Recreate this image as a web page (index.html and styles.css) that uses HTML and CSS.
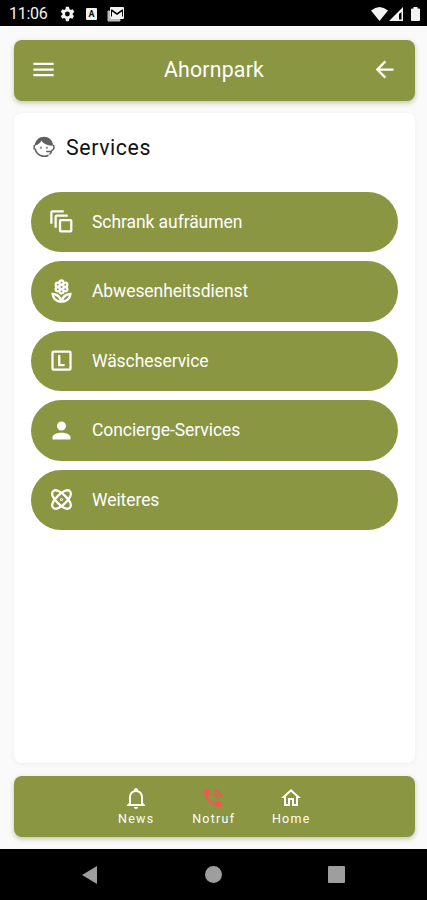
FILE: index.html
```html
<!DOCTYPE html>
<html lang="de">
<head>
<meta charset="utf-8">
<title>Ahornpark</title>
<link rel="stylesheet" href="styles.css">
</head>
<body>
<div class="status">
  <span class="time">11:06</span>
  <svg class="s-gear" viewBox="2 2 20 20"><path fill-rule="evenodd" d="M19.140 12.940a7 7 0 0 0 0-1.880l2.030-1.580-1.920-3.320-2.390.960a7 7 0 0 0-1.620-.940L14.380 3h-3.840l-.360 3.180a7 7 0 0 0-1.620.940l-2.390-.960-1.920 3.320 2.030 1.580a7 7 0 0 0 0 1.880l-2.030 1.580 1.920 3.320 2.390-.960a7 7 0 0 0 1.620.940l.360 3.180h3.840l.360-3.180a7 7 0 0 0 1.620-.940l2.390.960 1.920-3.320zM12.500 15a3 3 0 1 1 0-6 3 3 0 0 1 0 6z"/></svg>
  <span class="s-a">A</span>
  <svg class="s-mail" viewBox="0 0 17 15"><path class="dim" d="M1 4v10h12v-1.500H2.500V4z" stroke="#bbb"/><path fill-rule="evenodd" d="M4 0h12q1 0 1 1v10q0 1-1 1H4q-1 0-1-1V1q0-1 1-1zM5 9.500V4.500L10 8 15 4.500v5h1V2.500h-1L10 6 5 2.500H4v7z"/></svg>
  <span class="grow"></span>
  <svg class="s-wifi" viewBox="0 0 17 14"><path d="M0 3.500Q8.500-3.500 17 3.500L8.500 14z"/></svg>
  <svg class="s-cell" viewBox="0 0 14 14"><path fill-rule="evenodd" d="M14 0v14H0zM12.500 5v7.500H10V7z"/></svg>
  <svg class="s-batt" viewBox="0 0 9 14"><path d="M2.500 0h4v1.500H8q1 0 1 1V13q0 1-1 1H1q-1 0-1-1V2.500q0-1 1-1h1.500z"/></svg>
</div>
<main class="app">
  <header class="bar top">
    <svg class="icon27" viewBox="0 0 24 24"><path d="M3 6H21V8H3V6M3 11H21V13H3V11M3 16H21V18H3V16Z"/></svg>
    <h1>Ahornpark</h1>
    <svg class="icon27" viewBox="0 0 24 24"><path d="M20,11V13H8L13.500,18.500L12.080,19.920L4.160,12L12.080,4.080L13.500,5.500L8,11H20Z"/></svg>
  </header>
  <section class="card">
    <h2><svg class="agent" viewBox="0 0 24 24"><path d="M3.400 10.700C4.100 5.700 7.700 2.600 12 2.600S19.900 5.700 20.600 10.700C15.500 11 11.500 9.500 9.600 6.300 8.300 8.600 6.500 10.200 3.400 10.700z"/><path class="ring" d="M16.200 19.600A8.600 8.600 0 0 1 3.900 14.100L2.900 13.400V11L3.900 10.400M20.200 10.400L21.100 11v2.600L18.500 16.200H14M18.900 16.500Q18 18 17 19"/><circle class="eye" cx="9.200" cy="12.700" r="1.100"/><circle class="eye" cx="14.700" cy="12.700" r="1.100"/></svg><span>Services</span></h2>
    <nav class="list">
      <a class="pill"><svg class="icon27 line" viewBox="0 0 24 24"><path d="M3 14V4q0-1 1-1h10M6.800 17.500V7.800q0-1 1-1h9.700"/><rect x="10.700" y="10.700" width="10" height="10" rx=".7"/></svg><span>Schrank aufräumen</span></a>
      <a class="pill"><svg class="icon27" viewBox="0 0 24 24"><circle cx="12" cy="3.900" r="2.700"/><circle cx="15.500" cy="5.900" r="2.700"/><circle cx="15.500" cy="10.100" r="2.700"/><circle cx="12" cy="12.100" r="2.700"/><circle cx="8.500" cy="10.100" r="2.700"/><circle cx="8.500" cy="5.900" r="2.700"/><circle cx="12" cy="8" r="3"/><g class="hole"><circle cx="12" cy="4.100" r=".8"/><circle cx="15.300" cy="6" r=".8"/><circle cx="15.300" cy="10" r=".8"/><circle cx="12" cy="11.900" r=".8"/><circle cx="8.700" cy="10" r=".8"/><circle cx="8.700" cy="6" r=".8"/><circle cx="12" cy="8" r=".9"/></g><path fill-rule="evenodd" d="M12 22C7 22 3 18.500 3 13c4 0 7.500 1.600 9 4.800C13.500 14.600 17 13 21 13c0 5.500-4 9-9 9zM5.300 15.300c.9 2.500 2.700 4 5.100 4.500-.9-2.400-2.700-3.900-5.100-4.500zM18.700 15.300c-2.400.6-4.200 2.100-5.100 4.500 2.400-.5 4.200-2 5.100-4.500z"/></svg><span>Abwesenheitsdienst</span></a>
      <a class="pill"><svg class="icon27 line" viewBox="0 0 24 24"><rect x="4" y="4" width="16" height="16" rx="1"/><path d="M10 7v9h4.800"/></svg><span>Wäscheservice</span></a>
      <a class="pill"><svg class="icon27" viewBox="0 0 24 24"><path d="M12,4A4,4 0 1,1 12,12A4,4 0 1,1 12,4M12,14C16.420,14 20,15.790 20,18V20H4V18C4,15.790 7.580,14 12,14Z"/></svg><span>Concierge-Services</span></a>
      <a class="pill"><svg class="icon27 line" viewBox="0 0 24 24"><path d="M4.600 4.600C6.800 2.400 11.500 5 15.200 8.800S21.600 17.200 19.400 19.400 12.500 19 8.800 15.200 2.400 6.800 4.600 4.600z"/><path d="M19.400 4.600C17.200 2.400 12.500 5 8.800 8.800S2.400 17.200 4.600 19.400 11.500 19 15.200 15.200 21.600 6.800 19.400 4.600z"/><circle cx="12" cy="12" r=".4"/></svg><span>Weiteres</span></a>
    </nav>
  </section>
  <footer class="bar tabs">
    <a class="tab"><svg viewBox="0 0 24 24"><path d="M10 21H14C14 22.100 13.100 23 12 23S10 22.100 10 21M21 19V20H3V19L5 17V11C5 7.900 7 5.200 10 4.300V4C10 2.900 10.900 2 12 2S14 2.900 14 4V4.300C17 5.200 19 7.900 19 11V17L21 19M17 11C17 8.200 14.800 6 12 6S7 8.200 7 11V18H17V11Z"/></svg><span>News</span></a>
    <a class="tab"><svg class="red" viewBox="0 0 24 24"><path d="M15,12H17A5,5 0 0,0 12,7V9A3,3 0 0,1 15,12M19,12H21C21,7 16.970,3 12,3V5C15.860,5 19,8.130 19,12M20,15.500C18.750,15.500 17.550,15.300 16.430,14.930C16.080,14.820 15.690,14.900 15.410,15.180L13.210,17.380C10.380,15.940 8.060,13.620 6.620,10.790L8.820,8.590C9.100,8.310 9.180,7.920 9.070,7.570C8.700,6.450 8.500,5.250 8.500,4A1,1 0 0,0 7.500,3H4A1,1 0 0,0 3,4A17,17 0 0,0 20,21A1,1 0 0,0 21,20V16.500A1,1 0 0,0 20,15.500Z"/></svg><span>Notruf</span></a>
    <a class="tab"><svg viewBox="0 0 24 24"><path d="M12 5.690L17 10.190V18H15V12H9V18H7V10.190L12 5.690M12 3L2 12H5V20H11V14H13V20H19V12H22"/></svg><span>Home</span></a>
  </footer>
</main>
<div class="sysnav">
  <svg viewBox="0 0 17 20"><path d="M16 1v18L1 10z"/></svg>
  <span class="dot"></span>
  <span class="square"></span>
</div>
</body>
</html>
```
FILE: styles.css
```css
* { box-sizing: border-box; }
body {
  margin: 0;
  height: 900px;
  display: flex;
  flex-direction: column;
  overflow: hidden;
  background: #fafafa;
  font-family: Roboto, sans-serif;
  color: #fff;
}
svg { display: block; flex: none; fill: currentColor; }
h1, h2 { margin: 0; font-weight: 400; }

.status {
  height: 26px;
  flex: none;
  display: flex;
  align-items: center;
  padding: 2px 7px 0 9px;
  background: #000;
  color: #f2f2f2;
}
.time { width: 39px; font-size: 16px; line-height: 24px; letter-spacing: -.3px; }
.s-gear { width: 16px; height: 16px; margin-left: 11px; }
.s-a {
  width: 11px;
  height: 12px;
  margin-left: 11px;
  border-radius: 1px;
  background: #f2f2f2;
  color: #111;
  font-size: 9px;
  font-weight: 700;
  line-height: 12px;
  text-align: center;
}
.s-mail { width: 17px; height: 15px; margin-left: 10px; }
.dim { fill: #bbb; }
.grow { flex: 1; }
.s-wifi { width: 17px; height: 14px; }
.s-cell { width: 14px; height: 14px; margin-left: 1px; }
.s-batt { width: 9px; height: 14px; margin-left: 8px; }

.app {
  height: 823px;
  flex: none;
  display: flex;
  flex-direction: column;
  padding: 13.500px 12px 12.500px 13.500px;
}
.bar {
  height: 61px;
  flex: none;
  display: flex;
  align-items: center;
  justify-content: space-between;
  border-radius: 8px;
  background: #8a9641;
  box-shadow: 0 2px 5px rgba(110, 120, 50, .4);
}
.top { padding: 0 17px 1px 16.500px; }
.bar h1 { font-size: 21.300px; line-height: 28px; letter-spacing: .2px; }
.icon27 { width: 27px; height: 27px; }
.line { fill: none; stroke: currentColor; stroke-width: 2; }
.hole { fill: #8a9641; }

.card {
  flex: 1;
  margin: 12.500px 0;
  padding: 20px 17px 0 17.500px;
  border-radius: 8px;
  background: #fff;
  box-shadow: 0 1px 5px rgba(0, 0, 0, .05);
}
.card h2 {
  display: flex;
  align-items: center;
  gap: 9px;
  height: 28px;
  color: #111;
  font-size: 21.300px;
  letter-spacing: .6px;
}
.agent { width: 26px; height: 26px; color: #606060; }
.ring { fill: none; stroke: currentColor; stroke-width: 1.400; }
.eye { fill: #999; }
.list { display: flex; flex-direction: column; gap: 9px; margin-top: 30.500px; }
.pill {
  height: 60.500px;
  display: flex;
  align-items: center;
  gap: 17px;
  padding-left: 17px;
  border-radius: 31px;
  background: #8a9641;
  font-size: 17.500px;
  letter-spacing: -.070px;
}

.tabs { justify-content: center; }
.tab {
  width: 77.500px;
  display: flex;
  flex-direction: column;
  align-items: center;
  margin-left: -1px;
  margin-right: 1px;
  padding-top: 1px;
  font-size: 12.500px;
  line-height: 17px;
  letter-spacing: 1.250px;
}
.tab span { margin-right: -1px; }
.tab svg { width: 24px; height: 24px; }
.red { color: #fa5452; }

.sysnav {
  flex: 1;
  display: flex;
  align-items: center;
  justify-content: space-between;
  padding: 0 82px 0 81px;
  background: #000;
  color: #9e9e9e;
}
.sysnav svg { width: 17px; height: 20px; }
.dot { width: 17px; height: 17px; border-radius: 50%; background: #9e9e9e; }
.square { width: 17px; height: 17px; border-radius: 1px; background: #9e9e9e; }
```
